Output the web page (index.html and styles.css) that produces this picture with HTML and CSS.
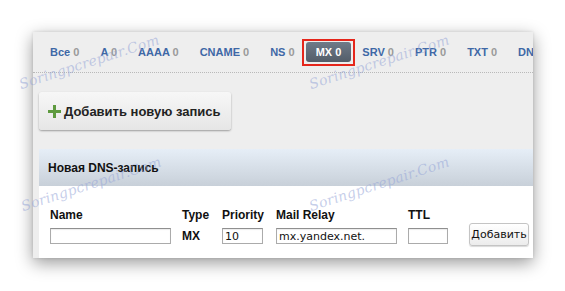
FILE: index.html
```html
<!DOCTYPE html>
<html lang="ru">
<head>
<meta charset="utf-8">
<title>DNS</title>
<link rel="stylesheet" href="styles.css">
</head>
<body>
<div class="panel">
  <nav class="tabs">
    <span class="tab">Все <b class="cnt">0</b></span>
    <span class="tab">A <b class="cnt">0</b></span>
    <span class="tab">AAAA <b class="cnt">0</b></span>
    <span class="tab">CNAME <b class="cnt">0</b></span>
    <span class="tab">NS <b class="cnt">0</b></span>
    <span class="tab active">MX <b class="cnt">0</b></span>
    <span class="tab">SRV <b class="cnt">0</b></span>
    <span class="tab">PTR <b class="cnt">0</b></span>
    <span class="tab">TXT <b class="cnt">0</b></span>
    <span class="tab">DN</span>
  </nav>
  <div class="body">
    <button class="add-btn" type="button">
      <svg class="plus" width="13" height="13" viewBox="0 0 13 13"><path d="M5 0h3v5h5v3H8v5H5V8H0V5h5z" fill="#5e9a3f"/></svg>
      <span>Добавить новую запись</span>
    </button>
    <div class="section-head">Новая DNS-запись</div>
    <div class="form">
      <div class="lbl">Name</div>
      <div class="lbl">Type</div>
      <div class="lbl">Priority</div>
      <div class="lbl">Mail Relay</div>
      <div class="lbl">TTL</div>
      <div class="lbl"></div>
      <input class="inp w-name" type="text" value="">
      <div class="type-val">MX</div>
      <input class="inp w-prio" type="text" value="10">
      <input class="inp w-relay" type="text" value="mx.yandex.net.">
      <input class="inp w-ttl" type="text" value="">
      <button class="submit" type="button">Добавить</button>
    </div>
  </div>
</div>
<div class="wm wm1">Soringpcrepair.Com</div>
<div class="wm wm2">Soringpcrepair.Com</div>
<div class="wm wm3">Soringpcrepair.Com</div>
<div class="wm wm4">Soringpcrepair.Com</div>
</body>
</html>
```
FILE: styles.css
```css
html, body {
  margin: 0;
  padding: 0;
  background: #ffffff;
  overflow: hidden;
  width: 565px;
  height: 291px;
}
body {
  font-family: "Liberation Sans", Arial, sans-serif;
  position: relative;
}
.panel {
  margin: 32px 0 0 33px;
  width: 500px;
  height: 226px;
  background: #eeeeee;
  box-shadow: 0 5px 16px rgba(0, 0, 0, 0.4), 0 0 3px rgba(0, 0, 0, 0.12);
  overflow: hidden;
}
.tabs {
  height: 40px;
  border-bottom: 1px dotted #b9b9b9;
  display: flex;
  align-items: center;
  padding-left: 7px;
  white-space: nowrap;
}
.tab {
  flex: none;
  position: relative;
  height: 20px;
  line-height: 21px;
  padding: 0 10px;
  margin-right: 1px;
  font-size: 11px;
  font-weight: bold;
  color: #3e68a6;
  border-radius: 3px;
}
.cnt {
  color: #9a9a9a;
}
.tab.active {
  background: linear-gradient(#6f7a88, #535d69);
  color: #ffffff;
}
.tab.active::after {
  content: "";
  position: absolute;
  left: -4px;
  top: -3px;
  right: -4px;
  bottom: -4px;
  border: 2px solid #e5261b;
}
.tab.active .cnt {
  color: #ffffff;
}
.body {
  padding: 19px 0 0 6px;
}
.add-btn {
  display: flex;
  align-items: center;
  gap: 3px;
  height: 38px;
  padding: 0 10px 0 9px;
  border: none;
  border-radius: 3px;
  background: linear-gradient(#f7f7f7, #e6e6e6);
  box-shadow: 0 1px 2px rgba(0, 0, 0, 0.35);
  font-family: "Liberation Sans", Arial, sans-serif;
  font-size: 13px;
  font-weight: bold;
  color: #222222;
  cursor: pointer;
}
.plus {
  display: block;
  margin-top: 1px;
}
.section-head {
  margin-top: 19px;
  height: 37px;
  line-height: 38px;
  padding-left: 9px;
  background: linear-gradient(#e6eef7, #c8d0d9);
  font-size: 12px;
  font-weight: bold;
  color: #111111;
}
.form {
  background: #ffffff;
  height: 72px;
  box-sizing: border-box;
  padding: 22px 0 0 11px;
  display: grid;
  grid-template-columns: 121px 29px 43px 121px 50px 60px;
  grid-template-rows: 14px 16px;
  column-gap: 11px;
  row-gap: 6px;
  align-items: start;
}
.lbl {
  font-size: 12px;
  font-weight: bold;
  line-height: 14px;
  color: #111111;
}
.type-val {
  font-size: 12px;
  font-weight: bold;
  line-height: 14px;
  padding-top: 1px;
  color: #111111;
}
.inp {
  box-sizing: border-box;
  height: 16px;
  margin: 0;
  padding: 0 2px;
  border: 1px solid #ababab;
  border-top-color: #8f8f8f;
  box-shadow: inset 0 1px 1px rgba(0, 0, 0, 0.08);
  font-family: "DejaVu Sans", sans-serif;
  font-size: 11px;
  color: #111111;
  background: #ffffff;
  outline: none;
}
.w-name, .w-relay { width: 121px; }
.w-prio { width: 41px; }
.w-ttl { width: 40px; }
.submit {
  box-sizing: border-box;
  width: 60px;
  height: 23px;
  margin-top: -5px;
  padding: 0;
  border: 1px solid #c4c4c4;
  border-radius: 3px;
  background: linear-gradient(#ffffff, #ececec);
  box-shadow: 0 1px 1px rgba(0, 0, 0, 0.15);
  font-family: "DejaVu Sans", sans-serif;
  font-size: 11px;
  color: #111111;
}
.wm {
  position: absolute;
  font-family: "DejaVu Serif", serif;
  font-style: italic;
  font-size: 14px;
  letter-spacing: 0.2px;
  color: rgba(150, 165, 215, 0.55);
  transform: rotate(-18deg);
  transform-origin: 0 100%;
  white-space: nowrap;
  pointer-events: none;
}
.wm1 { left: 22px; top: 76px; }
.wm2 { left: 312px; top: 76px; }
.wm3 { left: 24px; top: 198px; }
.wm4 { left: 312px; top: 198px; }
```
